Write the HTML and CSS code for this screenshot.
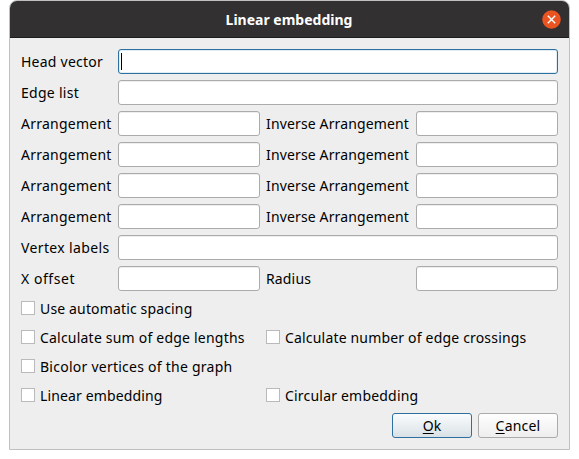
FILE: index.html
```html
<!DOCTYPE html>
<html lang="en">
<head>
<meta charset="utf-8">
<title>Linear embedding</title>
<link rel="stylesheet" href="styles.css">
</head>
<body>
<main class="window">
  <header class="titlebar">
    <h1 class="title">Linear embedding</h1>
    <button class="close" aria-label="Close"><svg viewBox="0 0 19 19" width="19" height="19"><circle cx="9.5" cy="9.5" r="9.3" fill="#e95420"/><path d="M5.8 5.8l7.4 7.4M13.2 5.8l-7.4 7.4" stroke="#fff" stroke-width="1.4" fill="none"/></svg></button>
  </header>
  <form class="form">
    <label class="head">Head vector</label><div class="field wide focused"><span class="caret"></span></div>
    <label class="edge">Edge list</label><div class="field wide"></div>
    <label class="arr">Arrangement</label><div class="field"></div><label class="inv">Inverse Arrangement</label><div class="field"></div>
    <label class="arr">Arrangement</label><div class="field"></div><label class="inv">Inverse Arrangement</label><div class="field"></div>
    <label class="arr">Arrangement</label><div class="field"></div><label class="inv">Inverse Arrangement</label><div class="field"></div>
    <label class="arr">Arrangement</label><div class="field"></div><label class="inv">Inverse Arrangement</label><div class="field"></div>
    <label class="vertex">Vertex labels</label><div class="field wide"></div>
    <label class="offset">X offset</label><div class="field"></div><label class="radius">Radius</label><div class="field"></div>
    <div class="check full"><i class="box"></i><span class="auto">Use automatic spacing</span></div>
    <div class="check"><i class="box"></i><span class="sum">Calculate sum of edge lengths</span></div>
    <div class="check"><i class="box"></i><span class="crossings">Calculate number of edge crossings</span></div>
    <div class="check full"><i class="box"></i><span class="bicolor">Bicolor vertices of the graph</span></div>
    <div class="check"><i class="box"></i><span class="linear">Linear embedding</span></div>
    <div class="check"><i class="box"></i><span class="circular">Circular embedding</span></div>
    <div class="actions">
      <button type="button" class="btn ok"><span><u>O</u>k</span></button>
      <button type="button" class="btn cancel"><span><u>C</u>ancel</span></button>
    </div>
  </form>
</main>
</body>
</html>
```
FILE: styles.css
```css
* { box-sizing: border-box; }
body {
  margin: 0;
  background: #fff;
  color: #000;
  font: 14px/23px "Noto Sans", "Open Sans", sans-serif;
}
.window {
  width: 561px;
  height: 450px;
  margin-left: 9px;
  border: 1px solid #c0c0c0;
  border-radius: 8px 8px 0 0;
  background: #eee;
  overflow: hidden;
}
.titlebar {
  display: grid;
  grid-template-columns: 1fr auto 1fr;
  align-items: center;
  height: 37px;
  padding: 0 8px 0 7px;
  background: #323031;
  border-bottom: 1px solid #1e1d1e;
  color: #fff;
}
.title {
  grid-column: 2;
  margin: 0;
  font-size: 14px;
  line-height: 23px;
  font-weight: 700;
  white-space: nowrap;
}
.close {
  justify-self: end;
  width: 19px;
  height: 19px;
  padding: 0;
  border: 0;
  background: none;
}
.close svg { display: block; }
.form {
  display: grid;
  grid-template-columns: 91px 142px 144px 142px;
  gap: 6px;
  padding: 11px;
}
label, .check span { white-space: nowrap; }
label { height: 25px; line-height: 25px; }
.head { letter-spacing: 0.24px; }
.edge { letter-spacing: 0.28px; }
.arr { letter-spacing: 0.24px; }
.inv { letter-spacing: 0.14px; }
.vertex { letter-spacing: 0.37px; }
.offset { letter-spacing: 0.55px; }
.radius { letter-spacing: 0.15px; }
.auto { letter-spacing: 0.15px; }
.sum { letter-spacing: 0.21px; }
.crossings { letter-spacing: 0.18px; }
.bicolor { letter-spacing: 0.25px; }
.linear { letter-spacing: 0.14px; }
.circular { letter-spacing: 0.2px; }
.cancel { letter-spacing: 0.2px; }
.field {
  height: 25px;
  padding: 3px 2px;
  background: #fff;
  border: 1px solid #ababab;
  border-radius: 3px;
  box-shadow: inset 0 1px #eee;
}
.wide { grid-column: span 3; }
.focused {
  border-color: #2d70a0;
  box-shadow: inset 0 0 0 1px #e1edf4;
}
.caret {
  display: block;
  width: 1px;
  height: 17px;
  background: #000;
}
.check {
  grid-column: span 2;
  display: flex;
  align-items: center;
  gap: 5px;
  height: 23px;
}
.full { grid-column: span 4; }
.box {
  width: 14px;
  height: 14px;
  margin-bottom: 1px;
  background: #fff;
  border: 1px solid #bababa;
}
.actions {
  grid-column: span 4;
  display: flex;
  justify-content: flex-end;
  gap: 6px;
}
.btn {
  width: 80px;
  height: 25px;
  padding: 0;
  border: 1px solid #ababab;
  border-radius: 3px;
  background: linear-gradient(#fefefe, #eee);
  color: #000;
  font: inherit;
}
.ok {
  border-color: #2d70a0;
  background: linear-gradient(#fafcfd, #d9e1e6);
}
.btn u {
  text-decoration-thickness: 1px;
  text-underline-offset: 2px;
  text-decoration-skip-ink: none;
}
```
